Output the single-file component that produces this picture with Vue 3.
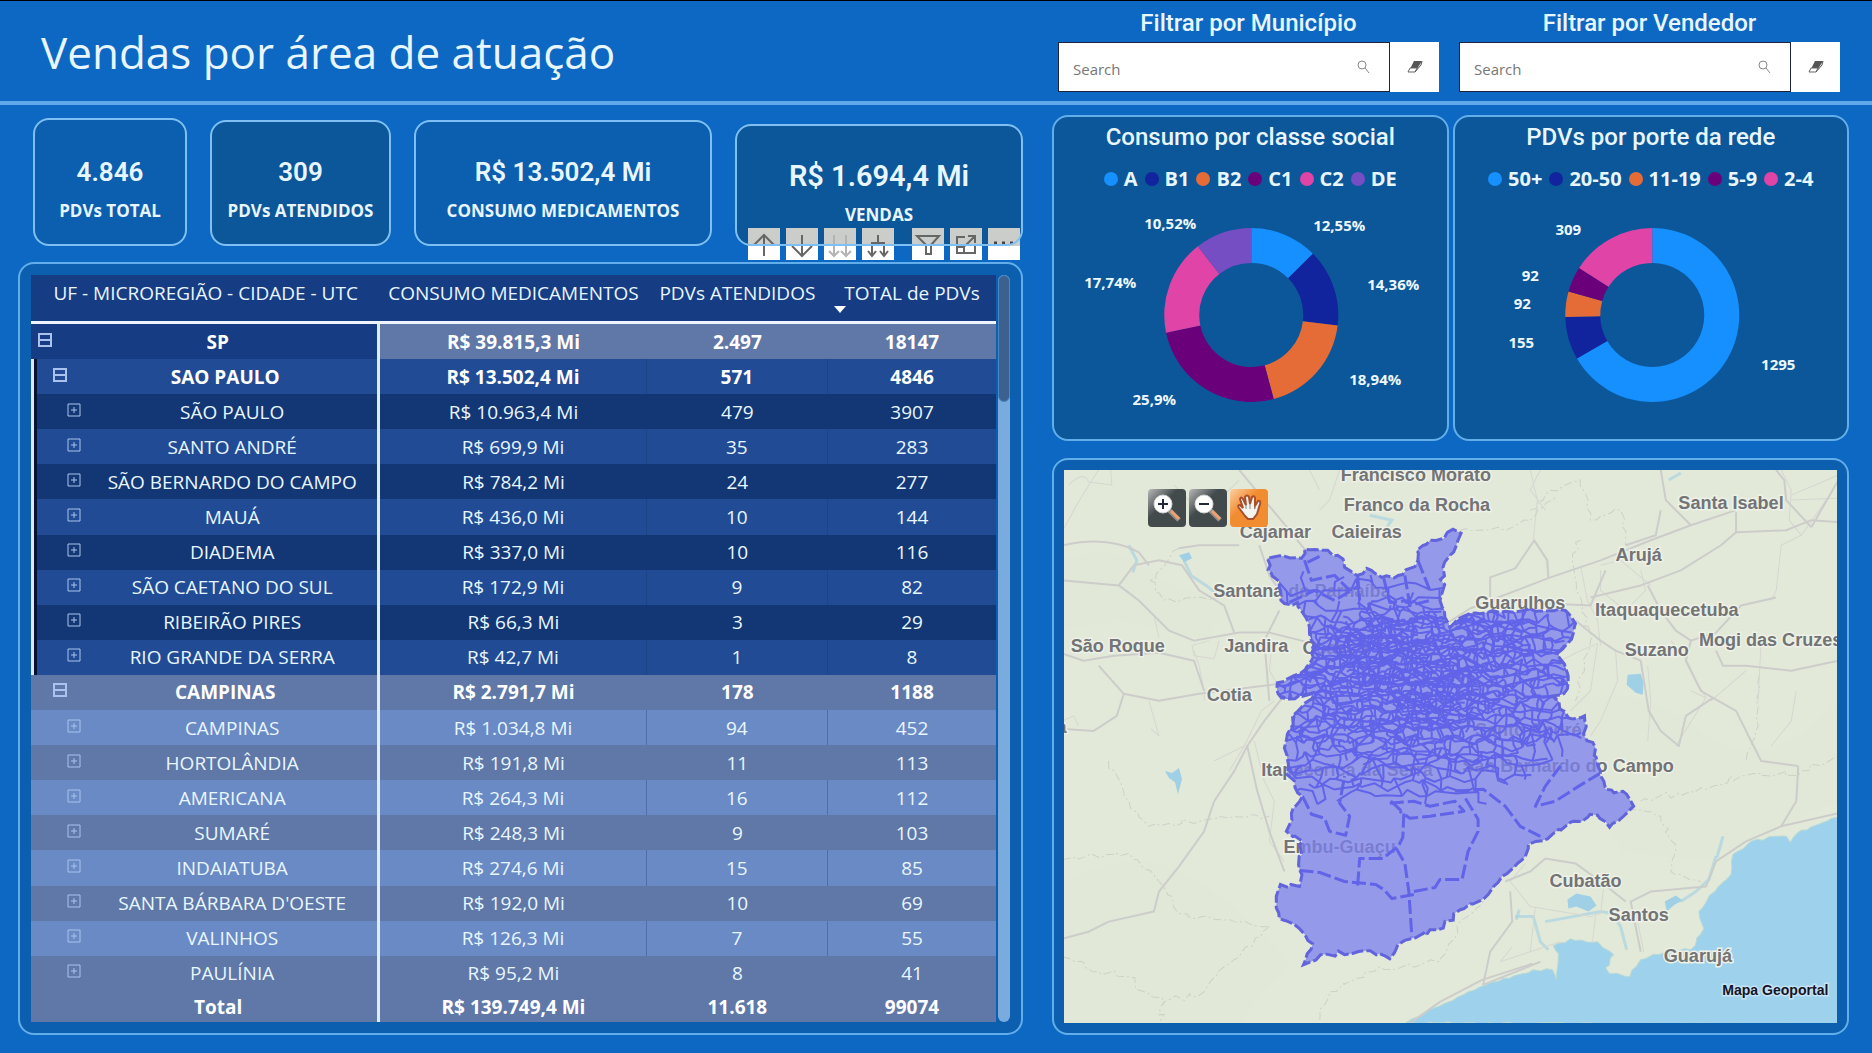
<template>
  <div class="dashboard">
    <header class="topbar">
      <h1>Vendas por área de atuação</h1>
      <div class="filters">
        <div v-for="f in filters" :key="f.id" class="filter">
          <label :for="f.id">{{ f.label }}</label>
          <div class="filter-row">
            <div class="search-box">
              <input :id="f.id" v-model="f.value" type="text" placeholder="Search">
              <svg viewBox="0 0 14 14" width="14" height="14" aria-hidden="true">
                <circle cx="6" cy="5" r="4" />
                <path d="M9 8 L13 13" />
              </svg>
            </div>
            <button type="button" class="erase" aria-label="Limpar" @click="f.value = ''">
              <svg viewBox="0 0 18 14" width="18" height="14" aria-hidden="true">
                <path d="M8 1 H16 L11 9 H4 Z" fill="#555" />
                <path d="M4 8 H11 L9 12 H2 Z" fill="#fff" stroke="#666" />
                <path d="M9 12 L15 5 L16 1" fill="none" stroke="#555" />
              </svg>
            </button>
          </div>
        </div>
      </div>
    </header>

    <main class="content">
      <div class="left">
        <div class="kpis">
          <section v-for="k in kpis" :key="k.label" class="kpi" :class="k.kind">
            <strong>{{ k.value }}</strong>
            <span>{{ k.label }}</span>
            <div v-if="k.kind === 'sales'" class="visual-tools">
              <button v-for="t in tools" :key="t.name" type="button" :aria-label="t.name" :class="t.kind">
                <svg viewBox="0 0 32 32" width="32" height="32" aria-hidden="true"><path :d="t.path" /></svg>
              </button>
            </div>
          </section>
        </div>

        <section class="panel table-panel">
          <table>
            <colgroup>
              <col class="c1"><col class="c2"><col class="c3"><col class="c4">
            </colgroup>
            <thead>
              <tr>
                <th>UF - MICROREGIÃO - CIDADE - UTC</th>
                <th>CONSUMO MEDICAMENTOS</th>
                <th>PDVs ATENDIDOS</th>
                <th class="sorted">TOTAL de PDVs</th>
              </tr>
            </thead>
            <tbody>
              <tr v-for="(r, i) in rows" :key="i" :class="['level' + r[0], rowTone(i)]">
                <td>
                  <div class="name">
                    <button type="button" class="toggle" :aria-label="'Expandir ' + r[1]">
                      <svg viewBox="0 0 14 14" width="14" height="14" aria-hidden="true">
                        <path d="M1 1 H13 V13 H1 Z" />
                        <path :d="r[0] < 2 ? 'M1 7 H13' : 'M4 7 H10 M7 4 V10'" />
                      </svg>
                    </button>
                    <span>{{ r[1] }}</span>
                  </div>
                </td>
                <td>R$ {{ r[2] }} Mi</td>
                <td>{{ r[3] }}</td>
                <td>{{ r[4] }}</td>
              </tr>
            </tbody>
            <tfoot>
              <tr>
                <td><div class="name"><span>Total</span></div></td>
                <td>R$ 139.749,4 Mi</td>
                <td>11.618</td>
                <td>99074</td>
              </tr>
            </tfoot>
          </table>
          <div class="scrollbar"><div class="thumb"></div></div>
        </section>
      </div>

      <div class="right">
        <div class="charts">
          <section v-for="c in charts" :key="c.title" class="panel chart">
            <h2>{{ c.title }}</h2>
            <ul class="legend">
              <li v-for="s in c.slices" :key="s.name">
                <i :style="{ background: s.color }"></i>{{ s.name }}
              </li>
            </ul>
            <svg class="donut" viewBox="3 -7 392 246" role="img" :aria-label="c.title">
              <path v-for="a in arcs(c.slices)" :key="a.name" :d="a.d" :fill="a.color" />
              <text v-for="s in c.slices" :key="s.name" :x="s.x" :y="s.y">{{ s.label }}</text>
            </svg>
          </section>
        </div>

        <section class="panel map-panel">
          <div class="map">
            <svg class="map-svg" viewBox="1064 470 773 551" preserveAspectRatio="xMidYMid slice" role="img" aria-label="Mapa">
              <defs>
                <clipPath id="area-clip"><path :d="areaPath" /></clipPath>
              </defs>
              <rect x="1064" y="470" width="773" height="551" fill="#e3e9d9" />
              <path v-for="(p, i) in greens" :key="'g' + i" :d="p" fill="#e1e8d8" />
              <path class="sea" :d="seaPath" />
              <path v-for="(p, i) in lakes" :key="'l' + i" :d="p" fill="#9fd0e6" />
              <path v-for="(p, i) in creeks" :key="'c' + i" :d="p" class="creek" />
              <path v-for="(p, i) in limits" :key="'b' + i" :d="p" class="limit" />
              <path v-for="(p, i) in minorRoads" :key="'m' + i" :d="p" class="road minor" />
              <path v-for="(p, i) in roads" :key="'r' + i" :d="p" class="road" />
              <text v-for="p in places" :key="p[0]" :x="p[1]" :y="p[2]" :text-anchor="p[3] || 'middle'" class="place">{{ p[0] }}</text>
              <path :d="areaPath" class="area" />
              <g clip-path="url(#area-clip)" class="mesh">
                <path v-for="(d, i) in meshes" :key="'x' + i" :d="d" />
                <path v-for="(d, i) in districts" :key="'d' + i" :d="d" class="district" />
              </g>
              <path :d="areaPath" class="outline" />
              <text x="1827" y="993" text-anchor="end" class="credit">Mapa Geoportal</text>
            </svg>
            <div class="map-tools">
              <button type="button" aria-label="Aproximar">
                <svg viewBox="0 0 38 38" aria-hidden="true">
                  <path d="M21 21 L31 31" stroke="#8c8c88" stroke-width="5" />
                  <path d="M23 22 L31 30" stroke="#f0a070" stroke-width="3" />
                  <circle cx="15" cy="15" r="9" fill="#fff" stroke="#d5d5d5" />
                  <path d="M10 15 H20 M15 10 V20" stroke="#222a3a" stroke-width="2" />
                </svg>
              </button>
              <button type="button" aria-label="Afastar">
                <svg viewBox="0 0 38 38" aria-hidden="true">
                  <path d="M21 21 L31 31" stroke="#8c8c88" stroke-width="5" />
                  <path d="M23 22 L31 30" stroke="#f0a070" stroke-width="3" />
                  <circle cx="15" cy="15" r="9" fill="#fff" stroke="#d5d5d5" />
                  <path d="M10 15 H20" stroke="#222a3a" stroke-width="2" />
                </svg>
              </button>
              <button type="button" class="active" aria-label="Mover">
                <svg viewBox="0 0 38 38" aria-hidden="true">
                  <path d="M15 27 L9 19 Q7 16 10 16 L13 19 L10 10 Q11 7 13 10 L16 16 L15 8 Q17 5 19 8 L20 15 L22 8 Q24 6 25 9 L25 17 L28 12 Q31 11 30 15 L27 25 L23 30 H18 Z" fill="#f3f3ef" stroke="#a8502c" stroke-width="2" />
                  <path d="M16 16 V20 M20 15 V20 M25 17 V20" stroke="#8d8d88" />
                </svg>
              </button>
            </div>
          </div>
        </section>
      </div>
    </main>
  </div>
</template>

<script setup>
import { ref } from 'vue';

const filters = ref([
  { id: 'municipio', label: 'Filtrar por Município', value: '' },
  { id: 'vendedor', label: 'Filtrar por Vendedor', value: '' },
]);

const kpis = [
  { value: '4.846', label: 'PDVs TOTAL', kind: 'first' },
  { value: '309', label: 'PDVs ATENDIDOS', kind: 'dark' },
  { value: 'R$ 13.502,4 Mi', label: 'CONSUMO MEDICAMENTOS', kind: '' },
  { value: 'R$ 1.694,4 Mi', label: 'VENDAS', kind: 'sales' },
];

const tools = [
  { name: 'Subir nível', kind: '', path: 'M16 28 V7 M6 17 L16 7 L26 17' },
  { name: 'Descer nível', kind: '', path: 'M16 7 V27 M6 18 L16 28 L26 18' },
  { name: 'Próximo nível', kind: 'faded', path: 'M10 7 V27 M5 23 L10 28 L15 23 M22 7 V27 M17 23 L22 28 L27 23' },
  { name: 'Expandir tudo', kind: '', path: 'M16 7 V15 M10 27 V15 H22 V27 M6 23 L10 28 L14 23 M18 23 L22 28 L26 23' },
  { name: 'Filtros', kind: 'apart', path: 'M5 8 H27 L19 17 V26 H14 V17 Z' },
  { name: 'Modo de foco', kind: '', path: 'M15 9 H7 V25 H25 V18 M7 19 H14 V25 M15 18 L25 8 M18 8 H25 V15' },
  { name: 'Mais opções', kind: 'more', path: 'M6 15 H9 M14 15 H17 M22 15 H25' },
];

// level, name, consumo, atendidos, total
const rows = [
  [0, 'SP', '39.815,3', '2.497', '18147'],
  [1, 'SAO PAULO', '13.502,4', '571', '4846'],
  [2, 'SÃO PAULO', '10.963,4', '479', '3907'],
  [2, 'SANTO ANDRÉ', '699,9', '35', '283'],
  [2, 'SÃO BERNARDO DO CAMPO', '784,2', '24', '277'],
  [2, 'MAUÁ', '436,0', '10', '144'],
  [2, 'DIADEMA', '337,0', '10', '116'],
  [2, 'SÃO CAETANO DO SUL', '172,9', '9', '82'],
  [2, 'RIBEIRÃO PIRES', '66,3', '3', '29'],
  [2, 'RIO GRANDE DA SERRA', '42,7', '1', '8'],
  [1, 'CAMPINAS', '2.791,7', '178', '1188'],
  [2, 'CAMPINAS', '1.034,8', '94', '452'],
  [2, 'HORTOLÂNDIA', '191,8', '11', '113'],
  [2, 'AMERICANA', '264,3', '16', '112'],
  [2, 'SUMARÉ', '248,3', '9', '103'],
  [2, 'INDAIATUBA', '274,6', '15', '85'],
  [2, "SANTA BÁRBARA D'OESTE", '192,0', '10', '69'],
  [2, 'VALINHOS', '126,3', '7', '55'],
  [2, 'PAULÍNIA', '95,2', '8', '41'],
];

function rowTone(i) {
  if (i === 0) return 'root';
  const stripe = i % 2 ? 'light' : 'deep';
  return i < 10 ? 'picked ' + stripe : stripe;
}

const charts = [
  {
    title: 'Consumo por classe social',
    slices: [
      { name: 'A', value: 12.55, label: '12,55%', color: '#168fff', x: 288, y: 31 },
      { name: 'B1', value: 14.36, label: '14,36%', color: '#12239e', x: 342, y: 90 },
      { name: 'B2', value: 18.94, label: '18,94%', color: '#e66c37', x: 324, y: 185 },
      { name: 'C1', value: 25.9, label: '25,9%', color: '#6b007b', x: 103, y: 205 },
      { name: 'C2', value: 17.74, label: '17,74%', color: '#e044a7', x: 59, y: 88 },
      { name: 'DE', value: 10.52, label: '10,52%', color: '#744ec2', x: 119, y: 29 },
    ],
  },
  {
    title: 'PDVs por porte da rede',
    slices: [
      { name: '50+', value: 1295, label: '1295', color: '#168fff', x: 326, y: 170 },
      { name: '20-50', value: 155, label: '155', color: '#12239e', x: 69, y: 148 },
      { name: '11-19', value: 92, label: '92', color: '#e66c37', x: 70, y: 109 },
      { name: '5-9', value: 92, label: '92', color: '#6b007b', x: 78, y: 81 },
      { name: '2-4', value: 309, label: '309', color: '#e044a7', x: 116, y: 35 },
    ],
  },
];

function arcs(slices) {
  const total = slices.reduce((sum, s) => sum + s.value, 0);
  const at = (r, t) => `${(200 + r * Math.sin(t)).toFixed(2)} ${(115 - r * Math.cos(t)).toFixed(2)}`;
  let start = 0;
  return slices.map(s => {
    const end = start + (s.value / total) * Math.PI * 2;
    const big = end - start > Math.PI ? 1 : 0;
    const d = `M${at(87, start)} A87 87 0 ${big} 1 ${at(87, end)} L${at(52, end)} A52 52 0 ${big} 0 ${at(52, start)} Z`;
    start = end;
    return { name: s.name, color: s.color, d };
  });
}

// small seeded generator, so the map is drawn the same on every load
let seed = 7;
function rnd() {
  seed = (seed * 16807) % 2147483647;
  return seed / 2147483647 - 0.5;
}

// makes a straight run of points look like a surveyed boundary
function rough(points, amount, close) {
  const out = [];
  const n = close ? points.length : points.length - 1;
  for (let i = 0; i < n; i++) {
    const [x, y] = points[i];
    const [x2, y2] = points[(i + 1) % points.length];
    const steps = Math.max(1, Math.round(Math.hypot(x2 - x, y2 - y) / 6));
    for (let k = 0; k < steps; k++) {
      const t = k / steps;
      const j = k ? amount : 0;
      out.push(`${(x + (x2 - x) * t + rnd() * j).toFixed(1)} ${(y + (y2 - y) * t + rnd() * j).toFixed(1)}`);
    }
  }
  if (!close) out.push(points[points.length - 1].join(' '));
  return 'M' + out.join(' L') + (close ? ' Z' : '');
}

const areaPath = rough([
  [1453, 529], [1444, 538], [1430, 540], [1417, 550], [1418, 560], [1403, 574], [1382, 577], [1367, 568],
  [1357, 575], [1345, 567], [1338, 555], [1323, 550], [1305, 549], [1302, 558], [1285, 556], [1268, 558],
  [1272, 573], [1280, 587], [1285, 603], [1298, 602], [1307, 618], [1310, 633], [1315, 643], [1312, 660],
  [1302, 672], [1278, 682], [1282, 697], [1315, 693], [1293, 715], [1288, 733], [1285, 747], [1289, 763],
  [1287, 773], [1303, 795], [1292, 812], [1287, 830], [1303, 840], [1300, 868], [1300, 885], [1281, 883],
  [1277, 900], [1280, 917], [1300, 927], [1313, 942], [1304, 963], [1321, 953], [1358, 950], [1380, 952],
  [1390, 957], [1398, 943], [1411, 937], [1438, 928], [1464, 907], [1488, 893], [1507, 872], [1525, 855],
  [1528, 843], [1552, 833], [1573, 820], [1597, 814], [1609, 826], [1633, 805], [1626, 793], [1605, 788],
  [1600, 770], [1595, 747], [1583, 733], [1584, 715], [1568, 717], [1553, 695], [1567, 688], [1565, 667],
  [1558, 652], [1573, 632], [1575, 623], [1565, 610], [1523, 610], [1500, 612], [1470, 613], [1450, 627],
  [1445, 617], [1440, 600], [1442, 593], [1443, 567], [1458, 540], [1461, 533],
], 5, true);

// honeycomb with shaken vertices: irregular census-like cells
function mesh(size, wanted) {
  const cols = Math.ceil(380 / size);
  const lines = Math.ceil(300 / size);
  const pts = [];
  for (let j = 0; j <= lines; j++) {
    pts.push([]);
    for (let i = 0; i <= cols; i++) {
      pts[j].push([1262 + i * size + rnd() * size * 0.8, 530 + j * size + rnd() * size * 0.9]);
    }
  }
  let d = '';
  const edge = (a, b) => {
    const mx = (a[0] + b[0]) / 2;
    const my = (a[1] + b[1]) / 2;
    if (!wanted(mx, my)) return;
    const q = [mx + rnd() * size * 0.6, my + rnd() * size * 0.6];
    d += 'M' + [a, q, b].map(p => p.map(v => v.toFixed(1)).join(' ')).join(' L');
  };
  for (let j = 0; j <= lines; j++) {
    for (let i = 0; i <= cols; i++) {
      if (i < cols) edge(pts[j][i], pts[j][i + 1]);
      if (j < lines && (i + j) % 2 === 0) edge(pts[j][i], pts[j + 1][i]);
    }
  }
  return d;
}

const inside = (x, y, cx, cy, rx, ry) => ((x - cx) / rx) ** 2 + ((y - cy) / ry) ** 2 < 1;

const meshes = [
  mesh(19, (x, y) => y > 575 && y < 800 - Math.max(0, x - 1480) * 0.6 && !(x > 1550 && y > 705)),
  mesh(15, (x, y) => inside(x, y, 1420, 695, 170, 100) || inside(x, y, 1350, 740, 75, 55)),
  mesh(11, (x, y) => inside(x, y, 1420, 690, 160, 78) || inside(x, y, 1500, 650, 75, 45)),
  mesh(9, (x, y) => inside(x, y, 1405, 672, 105, 66) || inside(x, y, 1475, 642, 60, 30)),
  mesh(7, (x, y) => inside(x, y, 1385, 655, 44, 36) || inside(x, y, 1430, 685, 46, 30)),
];

const districts = [
  'M1300 869 L1320 871 L1345 880 L1376 883 L1384 888 L1392 897 L1414 893',
  'M1303 795 L1312 813 L1325 817 L1330 830 L1346 834 L1350 815 L1340 802 L1345 775',
  'M1391 800 L1404 812 L1403 836 L1397 848 L1405 862 L1409 890 L1412 935',
  'M1358 884 L1360 857 L1383 857 L1397 846',
  'M1414 890 L1435 886 L1440 878 L1462 878 L1468 850 L1478 830 L1478 818 L1464 795',
  'M1390 802 L1414 800 L1430 805 L1455 800 L1464 810 L1430 815 L1410 817 L1400 810',
  'M1455 790 L1483 788 L1505 805 L1520 825 L1540 835',
  'M1600 772 L1580 784 L1555 800 L1535 805 L1545 785 L1560 765',
  'M1305 560 L1312 580 L1335 575 L1350 590 M1308 562 L1320 556 M1290 602 L1315 590 L1335 600 L1360 585',
  'M1358 575 L1360 600 M1384 578 L1390 602 L1410 600 M1405 575 L1410 605 L1430 600 M1418 560 L1430 590',
];

const seaPath = rough([
  [1406, 1021], [1440, 1004], [1480, 985], [1533, 968], [1552, 968], [1556, 978], [1558, 952], [1553, 944],
  [1570, 937], [1597, 940], [1613, 953], [1605, 966], [1609, 972], [1629, 975], [1640, 958], [1665, 950],
  [1690, 948], [1703, 927], [1698, 910], [1714, 890], [1730, 873], [1732, 853], [1756, 838], [1785, 835],
  [1789, 841], [1800, 829], [1820, 822], [1837, 816], [1840, 1023],
], 3, true);

const greens = [
  'M1064 560 Q1110 540 1150 570 T1230 590 L1210 640 L1120 620 L1064 630 Z',
  'M1560 700 Q1640 680 1700 730 T1837 700 V800 L1700 860 L1620 850 Z',
  'M1064 880 Q1140 840 1200 880 T1290 960 L1240 1021 H1064 Z',
];

const lakes = [
  'M1627 674 L1640 673 L1643 682 L1642 694 L1635 692 L1626 684 Z',
  'M1567 898 L1576 892 L1590 895 L1596 904 L1588 910 L1576 905 L1568 907 Z',
  'M1180 555 L1190 552 L1193 558 L1185 562 Z',
  'M1166 770 L1173 772 L1180 767 L1183 778 L1179 793 L1176 781 L1170 777 Z',
  'M1664 900 L1675 894 L1682 899 L1674 903 L1666 910 Z',
];

const creeks = [
  'M1515 915 L1533 915 L1540 940 L1548 948', 'M1519 908 L1516 918', 'M1610 910 L1620 925 L1626 948',
  'M1185 560 L1192 575 L1207 585 L1222 597', 'M1130 545 L1138 560 L1134 572', 'M1715 855 L1708 878 L1695 890 L1680 900',
  'M1722 835 L1716 856', 'M1668 480 L1680 473', 'M1370 515 L1392 520 L1385 530', 'M1545 920 L1600 910 L1612 912',
];

const limits = [
  rough([[1180, 548], [1150, 580], [1165, 600], [1220, 598]], 6),
  rough([[1064, 858], [1130, 852], [1160, 880], [1180, 912], [1235, 920], [1270, 925]], 6),
  rough([[1270, 925], [1240, 955], [1205, 990], [1165, 1000], [1160, 1021]], 8),
  rough([[1064, 955], [1100, 970], [1130, 975], [1165, 1003]], 8),
  rough([[1110, 760], [1130, 800], [1150, 825], [1210, 818], [1270, 815]], 6),
  rough([[1490, 893], [1460, 920], [1440, 960], [1380, 965], [1330, 990], [1320, 1021]], 8),
  rough([[1628, 806], [1660, 815], [1675, 850], [1670, 870], [1700, 880]], 6),
  rough([[1640, 800], [1690, 790], [1740, 775], [1800, 770], [1837, 755]], 8),
  rough([[1580, 540], [1572, 560], [1590, 640], [1575, 700]], 6),
  rough([[1530, 510], [1545, 495], [1580, 480], [1590, 520], [1620, 510], [1625, 545]], 6),
  rough([[1758, 675], [1755, 730], [1745, 760]], 4),
  rough([[1460, 530], [1510, 528], [1530, 520], [1555, 497]], 5),
];

const minorRoads = [
  'M1070 485 Q1085 470 1090 482 L1113 485 L1112 470',
  'M1175 485 L1195 505 L1190 520 M1195 505 L1225 495 L1240 480',
  'M1100 470 Q1080 500 1070 520 L1064 530',
  'M1128 590 L1140 600 L1155 615 L1160 637',
  'M1195 650 L1200 665 L1205 690 L1205 700',
  'M1220 640 L1215 658 L1195 655 L1193 645 L1210 640',
  'M1272 650 L1270 670 L1282 690',
  'M1064 720 L1075 715 L1080 725 M1150 700 L1160 735 L1152 728',
  'M1530 470 L1537 500 L1533 540 L1546 560 L1548 577',
  'M1580 565 L1587 600 L1597 620 L1600 645',
  'M1600 570 L1600 590 L1625 610 L1645 590 L1640 570 M1600 565 L1620 560 L1650 585',
  'M1615 650 L1617 680 L1600 720 L1590 735',
  'M1647 665 L1650 700 L1647 740',
  'M1560 660 L1580 650 L1597 643 L1590 690 L1570 710',
  'M1780 470 L1790 490 L1788 520 L1800 535 L1780 545 L1775 590 L1770 600',
  'M1790 495 L1837 475 M1790 500 L1837 498 M1800 535 L1825 500',
  'M1690 690 L1705 697 L1695 680 L1686 660 L1670 640',
  'M1710 700 L1745 670 M1705 697 L1675 745',
  'M1540 470 L1530 490 L1545 510 M1340 470 L1330 500 L1320 510 M1320 490 L1310 470',
  'M1230 770 L1245 745 L1262 710 L1275 700 M1245 745 L1215 760',
  'M1255 740 L1265 780 L1275 800 L1270 840 L1285 860',
  'M1510 880 L1530 905 L1590 915 L1600 912 M1510 880 L1525 862 M1535 905 L1530 950',
  'M1600 912 L1605 870 M1635 910 L1643 950 M1595 915 L1592 940',
  'M1500 960 L1530 950 L1560 940 M1500 960 L1512 945',
  'M1795 690 L1790 720 L1770 745 M1760 640 L1757 700',
];

const roads = [
  'M1064 580 L1098 583 L1120 585 L1140 600 L1170 630 L1195 640 L1240 632 L1270 632 L1310 642',
  'M1120 585 L1135 565 L1160 560 L1183 565 L1200 590 L1225 605 L1235 632',
  'M1064 545 Q1110 535 1140 552 L1150 565 M1180 548 L1200 545 L1240 545',
  'M1064 653 L1085 660 L1115 655 L1160 652 L1195 660 L1205 690',
  'M1100 665 L1125 693 L1160 700 L1200 693 L1280 683',
  'M1125 693 L1118 715 L1095 730 L1064 728',
  'M1283 697 L1265 720 L1248 745 L1235 770 L1215 800 L1205 830 L1180 865 L1160 890 L1155 910 L1110 920 L1090 930 L1064 937',
  'M1270 700 L1265 640 L1280 610',
  'M1248 745 L1258 790 L1270 830 L1285 870',
  'M1260 545 L1270 575 L1280 590 M1240 470 L1290 530 L1310 555',
  'M1490 597 L1490 577 L1515 568 L1534 540 L1547 560 L1548 577',
  'M1490 600 L1550 577 L1600 560 L1650 540 L1690 525 L1735 510',
  'M1590 597 L1640 585 L1680 570 L1720 545 L1735 532 L1735 512',
  'M1735 532 L1785 530 L1810 520 L1837 522',
  'M1810 527 L1785 500 L1783 480 L1775 470 M1810 527 L1837 480',
  'M1660 470 L1665 500 L1690 525 M1660 510 L1655 535 L1625 545',
  'M1647 585 L1660 610 L1675 630 L1690 640 L1715 632 L1740 605 L1775 597',
  'M1690 640 L1685 660 L1700 690 L1712 697',
  'M1715 650 L1722 665 L1745 665 L1790 670 L1837 660',
  'M1575 620 L1600 640 L1615 650 L1640 660 L1648 710 L1660 730 L1678 745 L1685 715 L1712 697 L1735 710 L1750 740 L1760 760 L1797 765',
  'M1797 765 L1795 800 L1780 825 L1837 812',
  'M1780 825 L1745 840 L1715 860 L1705 885 L1650 890 L1630 900 L1640 950',
  'M1505 880 L1530 870 L1545 857 L1575 862 L1600 880 L1625 900',
  'M1510 890 L1512 920 L1490 950 L1483 983 L1540 960',
  'M1410 1021 L1440 1000 L1482 978 L1532 962',
  'M1440 627 L1470 608 L1490 600 L1590 605 L1605 570',
];

const places = [
  ['Francisco Morato', 1416, 481],
  ['Franco da Rocha', 1417, 511],
  ['Cajamar', 1276, 538],
  ['Caieiras', 1367, 538],
  ['Santana de Parnaíba', 1214, 597, 'start'],
  ['São Roque', 1119, 651],
  ['Jandira', 1257, 651],
  ['Osasco', 1303, 653, 'start'],
  ['Cotia', 1230, 700],
  ['Santa Isabel', 1730, 509],
  ['Arujá', 1638, 561],
  ['Guarulhos', 1520, 609],
  ['Itaquaquecetuba', 1666, 615],
  ['Mogi das Cruzes', 1698, 645, 'start'],
  ['Suzano', 1656, 655],
  ['Santo André', 1528, 735],
  ['São Bernardo do Campo', 1673, 771, 'end'],
  ['Itapecerica da Serra', 1262, 775, 'start'],
  ['Embu-Guaçu', 1284, 852, 'start'],
  ['Cubatão', 1585, 886],
  ['Santos', 1638, 919],
  ['Guarujá', 1697, 960],
  ['a', 1068, 732, 'end'],
];
</script>

<style>
body {
  margin: 0;
  background: #0c68c2;
}
</style>

<style scoped>
* {
  box-sizing: border-box;
}
.dashboard {
  display: flex;
  flex-direction: column;
  min-height: 100vh;
  border-top: 1px solid #000;
  background: #0c68c2;
  color: #e8f6ff;
  font-family: "Open Sans", "Noto Sans", sans-serif;
}
button {
  padding: 0;
  border: 0;
  cursor: pointer;
}
svg {
  display: block;
}

.topbar {
  display: flex;
  justify-content: space-between;
  height: 104px;
  padding: 0 32px 0 41px;
  border-bottom: 4px solid #5fa8ea;
}
h1 {
  margin: 0;
  font-size: 44px;
  font-weight: 400;
  line-height: 102px;
  white-space: nowrap;
}
.filters {
  display: grid;
  grid-template-columns: 1fr 1fr;
  gap: 20px;
  width: 44%;
  max-width: 782px;
}
.filter label {
  display: block;
  height: 41px;
  padding-top: 6px;
  font-family: Roboto, sans-serif;
  font-size: 24px;
  font-weight: 500;
  line-height: 32px;
  text-align: center;
}
.filter-row {
  display: flex;
  height: 50px;
}
.search-box {
  display: flex;
  flex: 1;
  align-items: center;
  min-width: 0;
  padding-right: 19px;
  border: 1px solid #1d2340;
  background: #fff;
}
.search-box input {
  flex: 1;
  min-width: 0;
  height: 100%;
  padding: 3px 14px 0;
  border: 0;
  outline: none;
  background: none;
  font-family: inherit;
  font-size: 15px;
}
.search-box input::placeholder {
  color: #777;
  opacity: 1;
}
.search-box svg {
  fill: none;
  stroke: #888;
}
.erase {
  display: flex;
  align-items: center;
  justify-content: center;
  width: 49px;
  background: #fff;
}

.content {
  display: grid;
  flex: 1;
  grid-template-columns: 1005fr 797fr;
  gap: 29px;
  padding: 10px 23px 18px 18px;
}
.left,
.right {
  display: flex;
  flex-direction: column;
  min-width: 0;
}
.left {
  gap: 16px;
}
.right {
  gap: 17px;
}
.panel {
  border: 2px solid #62aeea;
  border-radius: 16px;
  background: #0b5fae;
}

.kpis {
  display: grid;
  grid-template-columns: 154fr 181fr 298fr 288fr;
  gap: 23px;
  align-items: end;
  padding: 3px 0 0 15px;
}
.kpi {
  position: relative;
  display: flex;
  flex-direction: column;
  gap: 12px;
  justify-content: flex-end;
  height: 126px;
  padding-bottom: 24px;
  border-radius: 16px;
  background: #0c5eae;
  text-align: center;
  white-space: nowrap;
}
.kpi::after {
  content: "";
  position: absolute;
  inset: 0;
  border: 2px solid #7fc0f4;
  border-radius: 16px;
  pointer-events: none;
}
.kpi.first {
  height: 128px;
}
.kpi.dark,
.kpi.sales {
  background: #0b5799;
}
.kpi.sales {
  height: 122px;
  padding-bottom: 20px;
}
.kpi strong {
  font-family: Roboto, sans-serif;
  font-size: 26px;
  font-weight: 600;
  line-height: 32px;
}
.kpi.sales strong {
  font-size: 29px;
}
.kpi span {
  font-size: 17px;
  font-weight: 700;
  line-height: 22px;
}
.visual-tools {
  position: absolute;
  bottom: -14px;
  left: 13px;
  display: flex;
  gap: 6px;
}
.visual-tools button {
  width: 32px;
  height: 32px;
  background: linear-gradient(#cbcdcb 18px, #fff 18px);
}
.visual-tools .apart {
  margin-left: 12px;
}
.visual-tools path {
  fill: none;
  stroke: #666;
  stroke-width: 2;
}
.visual-tools .faded path {
  stroke: #b3b3b3;
}
.visual-tools .more path {
  stroke: #444;
  stroke-width: 3;
}

.table-panel {
  display: flex;
  flex: 1;
  gap: 2px;
  padding: 11px;
}
table {
  flex: 1;
  table-layout: fixed;
  border-collapse: separate;
  border-spacing: 0;
  font-size: 19px;
  line-height: 24px;
  text-align: center;
  white-space: nowrap;
}
.c1 { width: 36.2%; }
.c2 { width: 27.6%; }
.c3 { width: 18.8%; }
.c4 { width: 17.4%; }
th {
  height: 49px;
  padding: 0 0 11px;
  border-bottom: 3px solid #eef4ff;
  background: #163c84;
  font-weight: 400;
}
.sorted {
  position: relative;
}
.sorted::after {
  content: "";
  position: absolute;
  bottom: 8px;
  left: 6px;
  border: 6px solid transparent;
  border-top: 7px solid #fff;
  border-bottom: 0;
}
td {
  height: 35px;
  padding: 0;
}
td:first-child {
  border-right: 3px solid #dcecff;
}
.name {
  display: flex;
  align-items: center;
  padding-left: 7px;
}
.name span {
  flex: 1;
}
.level1 .name { padding-left: 22px; }
.level2 .name { padding-left: 36px; }
tfoot .name { padding-left: 28px; }
.toggle {
  margin-right: 6px;
  padding-bottom: 4px;
  background: none;
}
.toggle path {
  fill: none;
  stroke: #a9c3ee;
}
.level0 .toggle path,
.level1 .toggle path {
  stroke-width: 2;
}
.level0,
.level1,
tfoot {
  color: #fff;
  font-weight: 700;
}
.deep td,
.root td,
tfoot td {
  background: #5f78a8;
}
.root td:first-child {
  background: #163c84;
}
.light td {
  background: #6a8ac5;
}
.picked.light td {
  background: #214c95;
}
.picked.deep td {
  background: #133675;
}
.light td:nth-child(2),
.light td:nth-child(3) {
  border-right: 1px solid rgba(20, 50, 110, 0.3);
}
.picked td:first-child {
  border-left: 3px solid #dfe9fb;
  box-shadow: inset 3px 0 #07132e;
}
.picked .name {
  margin-left: -3px;
}
tfoot td {
  height: 31px;
}
.scrollbar {
  width: 12px;
  border-radius: 6px;
  background: #7aabdf;
}
.thumb {
  height: 17%;
  border: 1px solid #4b86c4;
  border-radius: 6px;
  background: #3c618f;
}

.charts {
  display: grid;
  grid-template-columns: 1fr 1fr;
  gap: 4px;
}
.chart {
  display: flex;
  flex-direction: column;
  height: 326px;
  background: #0b5799;
}
h2 {
  margin: 4px 0 0;
  font-family: Roboto, sans-serif;
  font-size: 24px;
  font-weight: 500;
  line-height: 32px;
  text-align: center;
}
.legend {
  display: flex;
  gap: 7px;
  justify-content: center;
  margin: 12px 0 0;
  padding: 0;
  font-size: 20px;
  font-weight: 700;
  line-height: 28px;
  list-style: none;
}
.legend li {
  display: flex;
  gap: 6px;
  align-items: center;
}
.legend i {
  width: 14px;
  height: 14px;
  border-radius: 50%;
}
.donut {
  flex: 1;
  width: 100%;
  min-height: 0;
  overflow: visible;
}
.donut text {
  fill: #eef8ff;
  font-size: 15px;
  font-weight: 700;
  text-anchor: middle;
}

.map-panel {
  display: flex;
  flex: 1;
  padding: 10px;
}
.map {
  position: relative;
  flex: 1;
  min-height: 400px;
  overflow: hidden;
  background: #e3e9d9;
}
.map-svg {
  position: absolute;
  inset: 0;
  width: 100%;
  height: 100%;
}
.sea {
  fill: #9dd1ec;
  stroke: #b9d9d5;
}
.creek {
  fill: none;
  stroke: #a8d3e2;
  stroke-width: 3;
  opacity: 0.7;
}
.road {
  fill: none;
  stroke: #cccdca;
  stroke-width: 2;
  stroke-linejoin: round;
}
.minor {
  stroke: #d5d7d0;
  stroke-width: 1;
}
.limit {
  fill: none;
  stroke: #cdd1c8;
  stroke-dasharray: 8 3 2 3;
}
.place {
  fill: #727476;
  stroke: #eef1e7;
  stroke-width: 3;
  paint-order: stroke;
  font-family: "Liberation Sans", Arial, sans-serif;
  font-size: 18px;
  font-weight: 700;
}
.credit {
  fill: #14142a;
  stroke: #c6e3f3;
  stroke-width: 3;
  paint-order: stroke;
  font-family: "Liberation Sans", Arial, sans-serif;
  font-size: 14px;
  font-weight: 700;
}
.area {
  fill: #7c80ee;
  opacity: 0.76;
}
.mesh path {
  fill: none;
  stroke: #6163e8;
  stroke-width: 2;
  stroke-linejoin: round;
}
.mesh .district {
  stroke-width: 3;
  stroke-dasharray: 14 4;
}
.outline {
  fill: none;
  stroke: #6264dc;
  stroke-width: 3;
  stroke-dasharray: 12 3;
}
.map-tools {
  position: absolute;
  top: 19px;
  left: 84px;
  display: flex;
  gap: 3px;
}
.map-tools button {
  width: 38px;
  height: 38px;
  border-radius: 4px;
  background: linear-gradient(135deg, #b9bab8, #434a4c 40%);
}
.map-tools .active {
  background: linear-gradient(135deg, #fbd0a4, #f28c30 40%);
}
</style>
